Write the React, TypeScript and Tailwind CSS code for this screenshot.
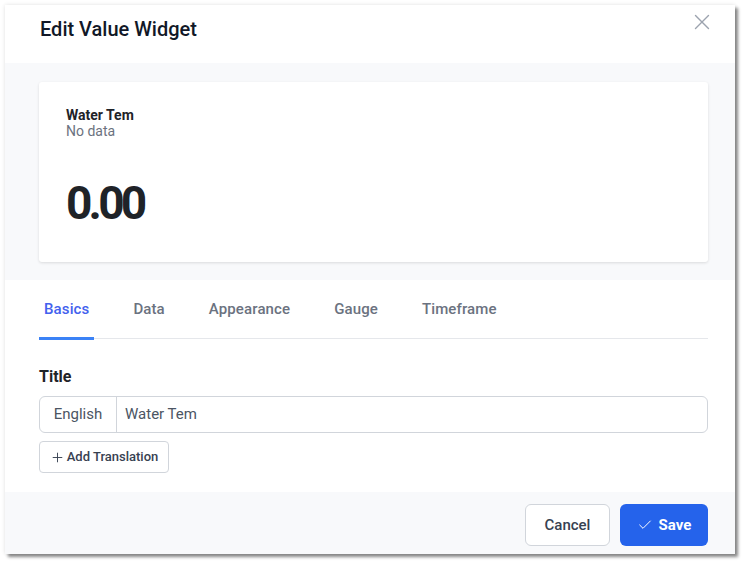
import { Check, Plus, X } from "lucide-react";

const tabs = ["Basics", "Data", "Appearance", "Gauge", "Timeframe"];

export default function App() {
  return (
    <div className="h-[564px] w-[744px] bg-white pl-[5px] pt-[5px] font-['Roboto',sans-serif]">
      <div className="flex h-[549px] w-[730px] flex-col bg-white shadow-[0_0_4px_rgba(0,0,0,0.12),3px_3px_3px_rgba(0,0,0,0.45)]">
        {/* Header */}
        <div className="relative h-[58px] pl-[35px] pt-[12px]">
          <h2 className="text-[20px] font-medium leading-[24px] text-[#111827]">Edit Value Widget</h2>
          <button className="absolute right-[20px] top-[4px] text-[#9ca3af]">
            <X className="h-[26px] w-[26px]" strokeWidth={1.3} />
          </button>
        </div>

        {/* Preview */}
        <div className="bg-[#f8f9fb] pb-[18px] pl-[34px] pr-[27px] pt-[19px]">
          <div className="h-[180px] rounded-[3px] bg-white px-[27px] pt-[25px] shadow-[0_1px_3px_rgba(0,0,0,0.12)]">
            <div className="text-[14px] font-bold leading-[16px] text-[#1f2328]">Water Tem</div>
            <div className="text-[14px] leading-[16px] text-[#6b7280]">No data</div>
            <div className="mt-[37px] text-[46px] font-bold leading-[54px] tracking-[-3.8px] text-[#1f2328]">
              0.00
            </div>
          </div>
        </div>

        {/* Body */}
        <div className="flex-1 pl-[34px] pr-[27px]">
          <div className="flex h-[59px] border-b border-[#e5e7eb]">
            {tabs.map((tab, i) => (
              <div
                key={tab}
                className={
                  i === 0
                    ? "relative mr-[34px] flex items-center px-[5px] text-[15px] font-medium tracking-[0.12px] text-[#4361ee]"
                    : "relative mr-[34px] flex items-center px-[5px] text-[15px] font-medium tracking-[0.12px] text-[#6b7280]"
                }
              >
                {tab}
                {i === 0 && <span className="absolute bottom-[-2px] left-0 right-0 h-[3px] bg-[#3b82f6]" />}
              </div>
            ))}
          </div>

          <div className="mt-[28px] text-[16px] font-bold leading-[20px] text-[#1f2328]">Title</div>
          <div className="mt-[9px] flex h-[37px] overflow-hidden rounded-[6px] border border-[#d1d5db]">
            <div className="flex w-[77px] items-center justify-center border-r border-[#d1d5db] text-[15px] text-[#4b5563]">
              English
            </div>
            <div className="flex flex-1 items-center pl-[8px] text-[15px] text-[#4b5563]">Water Tem</div>
          </div>
          <button className="mt-[8px] flex h-[32px] w-[130px] items-center justify-center gap-[2px] rounded-[4px] border border-[#d1d5db] text-[13px] font-medium text-[#374151]">
            <Plus className="h-[15px] w-[15px]" strokeWidth={1.5} />
            Add Translation
          </button>
        </div>

        {/* Footer */}
        <div className="flex h-[62px] items-start justify-end gap-[10px] bg-[#f8f9fb] pr-[27px] pt-[12px]">
          <button className="h-[42px] w-[85px] rounded-[6px] border border-[#d1d5db] bg-white text-[15px] font-medium text-[#374151]">
            Cancel
          </button>
          <button className="flex h-[42px] w-[88px] items-center justify-center gap-[6px] rounded-[6px] bg-[#2563eb] text-[15px] font-bold text-white">
            <Check className="h-[16px] w-[16px]" strokeWidth={1.5} />
            Save
          </button>
        </div>
      </div>
    </div>
  );
}
